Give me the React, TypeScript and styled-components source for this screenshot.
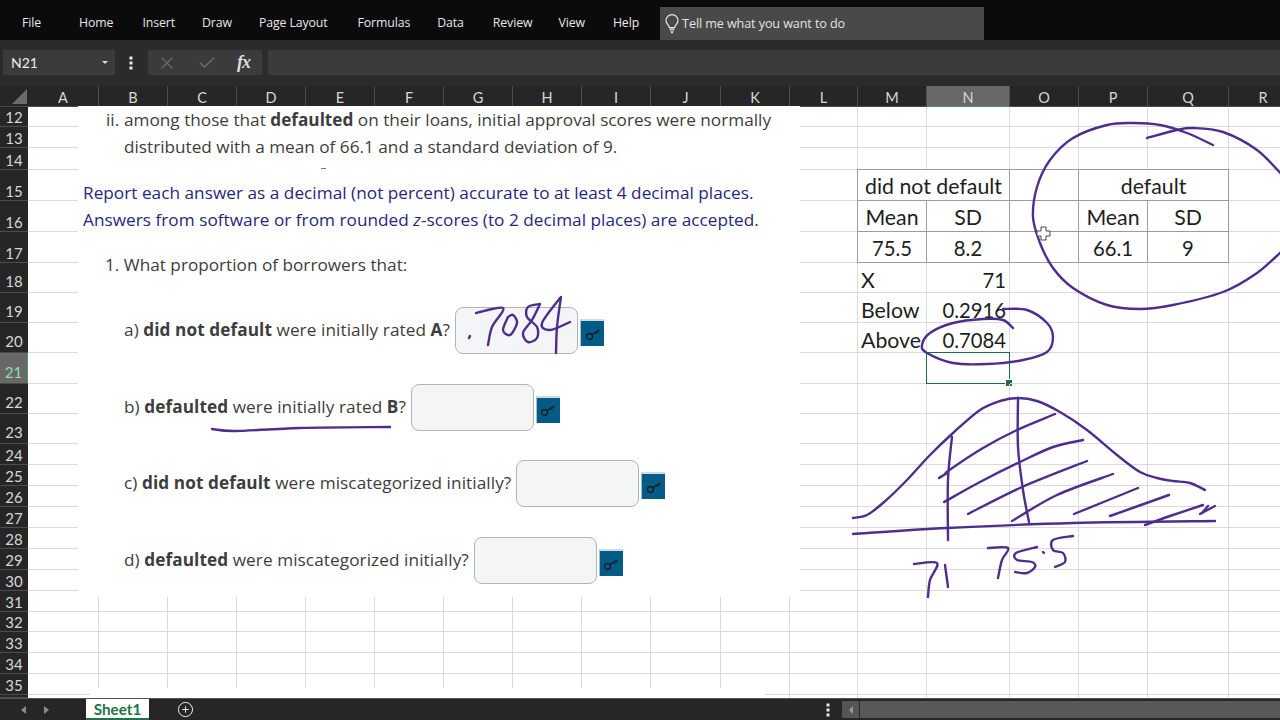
import * as React from 'react'
import styled, { createGlobalStyle } from 'styled-components'
import { X, Check, CirclePlus } from 'lucide-react'

const GlobalStyle = createGlobalStyle`
  html, body {
    margin: 0;
    padding: 0;
    background: #fff;
    overflow: hidden;
  }
  * {
    box-sizing: border-box;
  }
`

const Window = styled.div`
  position: relative;
  width: 1280px;
  height: 720px;
  overflow: hidden;
  display: flex;
  flex-direction: column;
  font-family: "Open Sans", "Liberation Sans", sans-serif;
`

const MenuBar = styled.div`
  height: 40px;
  background: #0b0b0b;
  display: flex;
  align-items: flex-end;
  flex: none;
`

const MenuItem = styled.div<{ $left: number }>`
  margin-left: ${p => p.$left}px;
  height: 33px;
  line-height: 32px;
  font-size: 12.3px;
  letter-spacing: -0.1px;
  color: #e8e8e8;
  white-space: nowrap;
`

const TellMe = styled.div`
  margin-left: 21px;
  width: 324px;
  height: 33px;
  background: #494949;
  color: #e4e4e4;
  display: flex;
  align-items: center;
  gap: 2px;
  padding-left: 4px;
  font-size: 12.6px;
  letter-spacing: -0.1px;
`

const FormulaBar = styled.div`
  height: 46px;
  flex: none;
  background: #2b2b2b;
  display: flex;
  align-items: flex-start;
  padding: 10px 0 0 3px;
`

const NameBox = styled.div`
  width: 112px;
  height: 25px;
  background: #3b3b3b;
  color: #ececec;
  font-family: Lato, sans-serif;
  font-size: 14px;
  display: flex;
  align-items: center;
  justify-content: space-between;
  padding: 0 7px 0 8px;
`

const Caret = styled.span`
  width: 0;
  height: 0;
  border-left: 3px solid transparent;
  border-right: 3px solid transparent;
  border-top: 3px solid #ddd;
`

const DotsSlot = styled.div`
  width: 31px;
  height: 25px;
  display: flex;
  align-items: center;
  justify-content: center;
`

const FormulaButtons = styled.div`
  margin-left: 2px;
  width: 114px;
  height: 25px;
  background: #3b3b3b;
  display: flex;
  align-items: center;
  padding-left: 9px;
  gap: 20px;
  color: #686868;
`

const Fx = styled.span`
  font-family: "Liberation Serif", serif;
  font-style: italic;
  font-weight: 700;
  font-size: 18px;
  color: #dcdcdc;
  letter-spacing: -1px;
`

const FormulaInput = styled.div`
  margin-left: 6px;
  flex: 1;
  height: 25px;
  background: #3b3b3b;
`

const Sheet = styled.div`
  position: relative;
  height: 612px;
  flex: none;
  overflow: hidden;
  background: #fff;
`

const Grid = styled.div`
  display: grid;
  grid-template-columns: 28px 71px 69px 69px 69px 69px 69px 69px 69px 69px 70px 69px 68px 69px 83px 69px 69px 81px 69px;
  grid-template-rows: 21px 20px 21px 22px 31px 31px 31px 30px 30px 30px 31px 30px 30px 21px 21px 21px 21px 21px 21px 21px 21px 20px 21px 21px 21px 3px;
  width: 1298px;
`

const Corner = styled.div`
  background: #262626;
  position: relative;
  border-bottom: 1px solid #4a4a4a;
  &::after {
    content: '';
    position: absolute;
    right: 1px;
    bottom: 2px;
    width: 0;
    height: 0;
    border-left: 15px solid transparent;
    border-bottom: 15px solid #6a6a6a;
  }
`

const ColHead = styled.div<{ $active?: boolean }>`
  background: ${p => (p.$active ? '#686868' : '#262626')};
  color: #d6d6d6;
  font-family: Lato, sans-serif;
  font-size: 14.5px;
  text-align: center;
  line-height: 24px;
  border-right: 1px solid #4c4c4c;
  border-bottom: ${p => (p.$active ? '1px solid #3f9a6b' : '1px solid #4a4a4a')};
`

const RowHead = styled.div<{ $active?: boolean; $tall?: boolean }>`
  background: ${p => (p.$active ? '#686868' : '#262626')};
  color: ${p => (p.$active ? '#8fe0b4' : '#d6d6d6')};
  font-family: Lato, sans-serif;
  font-size: 15px;
  display: flex;
  align-items: flex-end;
  justify-content: center;
  line-height: 16px;
  padding-bottom: ${p => (p.$tall ? '3px' : '1px')};
  overflow: hidden;
  border-bottom: 1px solid #4c4c4c;
  border-right: ${p => (p.$active ? '1px solid #3f9a6b' : 'none')};
`

const Cell = styled.div<{ $boxed?: boolean; $align?: string; $span?: number; $label?: boolean }>`
  position: relative;
  grid-column: span ${p => p.$span ?? 1};
  border-right: 1px solid #dadada;
  border-bottom: 1px solid #dadada;
  font-family: Lato, sans-serif;
  font-size: ${p => (p.$label ? '21.3px' : '20.3px')};
  color: #1e1e1e;
  display: flex;
  align-items: center;
  padding: ${p => (p.$boxed ? '1px' : '4px')} 3px 0;
  white-space: nowrap;
  justify-content: ${p => p.$align ?? 'flex-start'};
  ${p =>
    p.$boxed &&
    `
    border: 1px solid #9c9c9c;
    margin: -1px 0 0 -1px;
  `}
`

const Selection = styled.div`
  position: absolute;
  inset: -1px -1px -1px -1px;
  border: 1.5px solid #1f6b43;
  &::after {
    content: '';
    position: absolute;
    right: -4px;
    bottom: -4px;
    width: 6px;
    height: 6px;
    background: #1f6b43;
    border: 1px solid #fff;
  }
`

const Picture = styled.div`
  position: absolute;
  left: 78px;
  top: 20px;
  width: 722px;
  height: 491px;
  background: #fff;
  color: #3d3d3d;
  font-size: 17.2px;
  line-height: 27px;
  display: flex;
  flex-direction: column;
`

const ListLine = styled.div`
  display: grid;
  grid-template-columns: 18px 1fr;
  padding-left: 28px;
  white-space: nowrap;
`

const Mark = styled.span`
  position: absolute;
  left: 243px;
  top: 62px;
  width: 5px;
  height: 1px;
  background: #777;
`

const Notice = styled.div`
  margin: 19px 0 0 5px;
  color: #27277d;
  white-space: nowrap;
  letter-spacing: 0.03px;
`

const Lead = styled.div`
  margin: 18px 0 0 27px;
  white-space: nowrap;
`

const Questions = styled.div`
  margin: 29px 0 0 46px;
  display: flex;
  flex-direction: column;
  gap: 29.7px;
`

const QuestionRow = styled.div`
  display: flex;
  align-items: center;
  height: 47px;
  white-space: nowrap;
`

const QuestionText = styled.span`
  white-space: pre;
  letter-spacing: 0.08px;
  padding-bottom: 2px;
`

const Answer = styled.div`
  margin-left: 5px;
  width: 123px;
  height: 47px;
  background: #f3f5f6;
  border: 1px solid #b4b4b4;
  border-radius: 8px;
`

const KeyButton = styled.div`
  margin: 4px 0 0 2px;
  width: 24px;
  height: 27px;
  background: #045b85;
  border-top: 2px solid #cfdce3;
  border-left: 1px solid #9fc0d0;
  display: flex;
  align-items: center;
  justify-content: center;
`

const NextPicture = styled.div`
  position: absolute;
  left: 90px;
  top: 602px;
  width: 675px;
  height: 10px;
  background: #fff;
  overflow: hidden;
  padding-top: 8px;
  color: #3d3d3d;
  font-size: 17.2px;
  line-height: 22px;
  white-space: nowrap;
  padding-left: 2px;
`

const TabBar = styled.div`
  flex: 1;
  background: #262626;
  display: flex;
  align-items: center;
  border-top: 1px solid #555;
`

const ArrowSlot = styled.div<{ $left: number }>`
  margin-left: ${p => p.$left}px;
  display: flex;
`

const SheetTab = styled.div`
  margin-left: 36px;
  width: 63px;
  height: 21px;
  background: #fff;
  color: #217346;
  font-family: Lato, sans-serif;
  font-weight: 700;
  font-size: 15.2px;
  text-align: center;
  line-height: 21px;
  border-bottom: 2px solid #217346;
  align-self: flex-start;
`

const AddSheet = styled.div`
  margin-left: 28px;
  display: flex;
  color: #eee;
`

const ScrollDots = styled.div`
  margin-left: 632px;
  display: flex;
`

const ScrollLeft = styled.div`
  margin-left: 12px;
  width: 17px;
  height: 17px;
  background: #555;
  display: flex;
  align-items: center;
  justify-content: center;
`

const ScrollThumb = styled.div`
  margin-left: 1px;
  flex: 1;
  height: 17px;
  background: #585858;
`

const InkLayer = styled.svg`
  position: absolute;
  left: 0;
  top: 0;
  pointer-events: none;
`

const menu: [string, number][] = [
  ['File', 22],
  ['Home', 38],
  ['Insert', 29],
  ['Draw', 27],
  ['Page Layout', 27],
  ['Formulas', 30],
  ['Data', 27],
  ['Review', 29],
  ['View', 26],
  ['Help', 28],
]

const columns = ['A', 'B', 'C', 'D', 'E', 'F', 'G', 'H', 'I', 'J', 'K', 'L', 'M', 'N', 'O', 'P', 'Q', 'R']

interface CellData {
  text?: string
  boxed?: boolean
  align?: string
  span?: number
  label?: boolean
}

const center = 'center'
const right = 'flex-end'

const cellData: Record<string, CellData> = {
  M15: { text: 'did not default', boxed: true, align: center, span: 2, label: true },
  O15: { boxed: true },
  P15: { text: 'default', boxed: true, align: center, span: 2, label: true },
  M16: { text: 'Mean', boxed: true, align: center, label: true },
  N16: { text: 'SD', boxed: true, align: center, label: true },
  O16: { boxed: true },
  P16: { text: 'Mean', boxed: true, align: center, label: true },
  Q16: { text: 'SD', boxed: true, align: center, label: true },
  M17: { text: '75.5', boxed: true, align: center },
  N17: { text: '8.2', boxed: true, align: center },
  O17: { boxed: true },
  P17: { text: '66.1', boxed: true, align: center },
  Q17: { text: '9', boxed: true, align: center },
  M18: { text: 'X', label: true },
  N18: { text: '71', align: right },
  M19: { text: 'Below', label: true },
  N19: { text: '0.2916', align: right },
  M20: { text: 'Above', label: true },
  N20: { text: '0.7084', align: right },
}

const covered = new Set(['N15', 'Q15'])

// catmull-rom through the sampled pen points
const smooth = (pts: number[][]): string => {
  let d = `M${pts[0][0]} ${pts[0][1]}`
  for (let i = 0; i < pts.length - 1; i++) {
    const p0 = pts[Math.max(i - 1, 0)]
    const p1 = pts[i]
    const p2 = pts[i + 1]
    const p3 = pts[Math.min(i + 2, pts.length - 1)]
    const c1x = p1[0] + (p2[0] - p0[0]) / 6
    const c1y = p1[1] + (p2[1] - p0[1]) / 6
    const c2x = p2[0] - (p3[0] - p1[0]) / 6
    const c2y = p2[1] - (p3[1] - p1[1]) / 6
    d += ` C${c1x.toFixed(1)} ${c1y.toFixed(1)} ${c2x.toFixed(1)} ${c2y.toFixed(1)} ${p2[0]} ${p2[1]}`
  }
  return d
}

const strokes: number[][][] = [
  // big circle
  [[1147, 138], [1177, 130], [1193, 128], [1223, 132], [1257, 150], [1283, 176]],
  [[1283, 250], [1257, 273], [1223, 292], [1173, 305], [1140, 309], [1107, 305], [1073, 288], [1053, 268], [1040, 243], [1033, 217], [1037, 187], [1050, 160], [1073, 138], [1107, 125], [1133, 123], [1160, 125], [1187, 133], [1213, 145]],
  // ring round 0.7084
  [[1003, 309], [1027, 310], [1047, 323], [1053, 337], [1047, 352], [1023, 360], [987, 364], [953, 363], [927, 353], [922, 345], [930, 333], [953, 323], [983, 319], [1003, 320], [1013, 328]],
  // bell curve
  [[853, 518], [867, 515], [883, 503], [907, 480], [930, 455], [953, 433], [980, 410], [1000, 401], [1018, 398], [1037, 401], [1060, 412], [1087, 430], [1117, 455], [1140, 472], [1157, 478], [1173, 481], [1190, 483], [1205, 490]],
  [[853, 534], [947, 528], [1073, 523], [1215, 521]],
  [[952, 437], [948, 480], [948, 540]],
  [[1018, 398], [1018, 447], [1023, 490], [1029, 522]],
  // hatching
  [[939, 478], [947, 473], [948, 471], [983, 448], [1017, 430], [1055, 414]],
  [[944, 502], [980, 482], [1020, 462], [1053, 447], [1083, 440]],
  [[968, 514], [1022, 487], [1087, 461]],
  [[1012, 521], [1057, 495], [1113, 474]],
  [[1074, 514], [1138, 488]],
  [[1110, 516], [1169, 495]],
  [[1145, 525], [1173, 515], [1203, 505]],
  [[1200, 514], [1215, 506]],
  [[1202, 513], [1208, 506]],
  // 71
  [[914, 564], [937, 563], [930, 580], [928, 597]],
  [[945, 565], [948, 587]],
  // 75.5
  [[988, 548], [1008, 548], [1002, 560], [998, 578]],
  [[1037, 547], [1016, 553], [1017, 560], [1032, 562], [1035, 567], [1027, 573], [1015, 572]],
  [[1043, 552], [1044, 553]],
  [[1073, 536], [1053, 540], [1053, 550], [1063, 553], [1065, 562], [1055, 567]],
  // .7084
  [[470, 336], [469, 338]],
  [[476, 313], [503, 308], [492, 327], [488, 345]],
  [[508, 317], [503, 330], [510, 335], [517, 323], [513, 315], [508, 317]],
  [[540, 304], [528, 307], [527, 317], [537, 327], [537, 338], [528, 342], [523, 333], [532, 320], [540, 304]],
  [[560, 298], [542, 323], [550, 330], [570, 322]],
  [[561, 297], [557, 327], [556, 353]],
  // underline
  [[212, 429], [235, 431], [300, 428], [390, 427]],
]

const Bulb = () => (
  <svg width="16" height="20" viewBox="0 0 16 20" fill="none" stroke="#e6e6e6" strokeWidth="1.2">
    <path d="M5.4 13.6C5 11 2 9.8 2 6.6a6 6 0 0 1 12 0c0 3.2-3 4.4-3.4 7z" />
    <path d="M5.6 15.2h4.8M6 17h4M7 18.6h2" />
  </svg>
)

const KeyIcon = () => (
  <svg width="16" height="14" viewBox="0 0 16 14" fill="none" stroke="#0d1c26" strokeWidth="1.3">
    <circle cx="4.5" cy="9.5" r="3" />
    <path d="M7 7.6L14 3M11 5l1.4 1.8M13.2 3.6l1 1.4" />
  </svg>
)

const Dots = ({ color }: { color: string }) => (
  <svg width="4" height="14" viewBox="0 0 4 14" fill={color}>
    <rect x="0.5" y="0.5" width="3" height="3" />
    <rect x="0.5" y="5.5" width="3" height="3" />
    <rect x="0.5" y="10.5" width="3" height="3" />
  </svg>
)

const Arrow = ({ points, color }: { points: string; color: string }) => (
  <svg width="6" height="10" viewBox="0 0 6 10" fill={color}>
    <polygon points={points} />
  </svg>
)

const questions = [
  { label: 'a)', bold: 'did not default', rest: ' were initially rated ', tail: 'A', end: '?' },
  { label: 'b)', bold: 'defaulted', rest: ' were initially rated ', tail: 'B', end: '?' },
  { label: 'c)', bold: 'did not default', rest: ' were miscategorized initially?', tail: '', end: '' },
  { label: 'd)', bold: 'defaulted', rest: ' were miscategorized initially?', tail: '', end: '' },
]

const rowNumbers = Array.from({ length: 25 }, (_, i) => i + 12)

const App: React.FC = () => {
  const rows = rowNumbers.map(row => (
    <React.Fragment key={row}>
      <RowHead $active={row === 21} $tall={row >= 18 && row <= 23}>
        {row < 36 ? row : ''}
      </RowHead>
      {columns.map(col => {
        const id = `${col}${row}`
        if (covered.has(id)) return null
        const data = cellData[id]
        return (
          <Cell key={id} $boxed={data?.boxed} $align={data?.align} $span={data?.span} $label={data?.label}>
            {data?.text}
            {id === 'N21' && <Selection />}
          </Cell>
        )
      })}
    </React.Fragment>
  ))

  return (
    <Window>
      <GlobalStyle />
      <MenuBar>
        {menu.map(([name, left]) => (
          <MenuItem key={name} $left={left}>
            {name}
          </MenuItem>
        ))}
        <TellMe>
          <Bulb />
          Tell me what you want to do
        </TellMe>
      </MenuBar>

      <FormulaBar>
        <NameBox>
          N21
          <Caret />
        </NameBox>
        <DotsSlot>
          <Dots color="#e8e8e8" />
        </DotsSlot>
        <FormulaButtons>
          <X size={20} strokeWidth={1.6} />
          <Check size={20} strokeWidth={2} />
          <Fx>fx</Fx>
        </FormulaButtons>
        <FormulaInput />
      </FormulaBar>

      <Sheet>
        <Grid>
          <Corner />
          {columns.map(col => (
            <ColHead key={col} $active={col === 'N'}>
              {col}
            </ColHead>
          ))}
          {rows}
        </Grid>

        <Picture>
          <ListLine>
            <span>ii.</span>
            <span>
              among those that <b>defaulted</b> on their loans, initial approval scores were normally
            </span>
          </ListLine>
          <ListLine>
            <span />
            <span>distributed with a mean of 66.1 and a standard deviation of 9.</span>
          </ListLine>
          <Mark />
          <Notice>
            Report each answer as a decimal (not percent) accurate to at least 4 decimal places.
            <br />
            Answers from software or from rounded <i>z</i>-scores (to 2 decimal places) are accepted.
          </Notice>
          <Lead>1. What proportion of borrowers that:</Lead>
          <Questions>
            {questions.map(q => (
              <QuestionRow key={q.label}>
                <QuestionText>
                  {q.label} <b>{q.bold}</b>
                  {q.rest}
                  <b>{q.tail}</b>
                  {q.end}
                </QuestionText>
                <Answer />
                <KeyButton>
                  <KeyIcon />
                </KeyButton>
              </QuestionRow>
            ))}
          </Questions>
        </Picture>

        <NextPicture>
          2. A borrower is selected at random from those that <b>did not default</b>, what is the probability that the score
        </NextPicture>
      </Sheet>

      <TabBar>
        <ArrowSlot $left={20}>
          <Arrow points="6,1 1,5 6,9" color="#8a8a8a" />
        </ArrowSlot>
        <ArrowSlot $left={18}>
          <Arrow points="0,1 5,5 0,9" color="#8a8a8a" />
        </ArrowSlot>
        <SheetTab>Sheet1</SheetTab>
        <AddSheet>
          <CirclePlus size={17} strokeWidth={1.4} />
        </AddSheet>
        <ScrollDots>
          <Dots color="#e8e8e8" />
        </ScrollDots>
        <ScrollLeft>
          <Arrow points="5,1 1,5 5,9" color="#9a9a9a" />
        </ScrollLeft>
        <ScrollThumb />
      </TabBar>

      <InkLayer width="1280" height="720" viewBox="0 0 1280 720" fill="none">
        {strokes.map((pts, i) => (
          <path key={i} d={smooth(pts)} stroke="#4f2d8f" strokeWidth="2.4" strokeLinecap="round" strokeLinejoin="round" />
        ))}
        <path
          d="M1041 227h5v4h4v5h-4v4h-5v-4h-4v-5h4z"
          fill="#fff"
          stroke="#444"
          strokeWidth="1"
        />
      </InkLayer>
    </Window>
  )
}

export default App
